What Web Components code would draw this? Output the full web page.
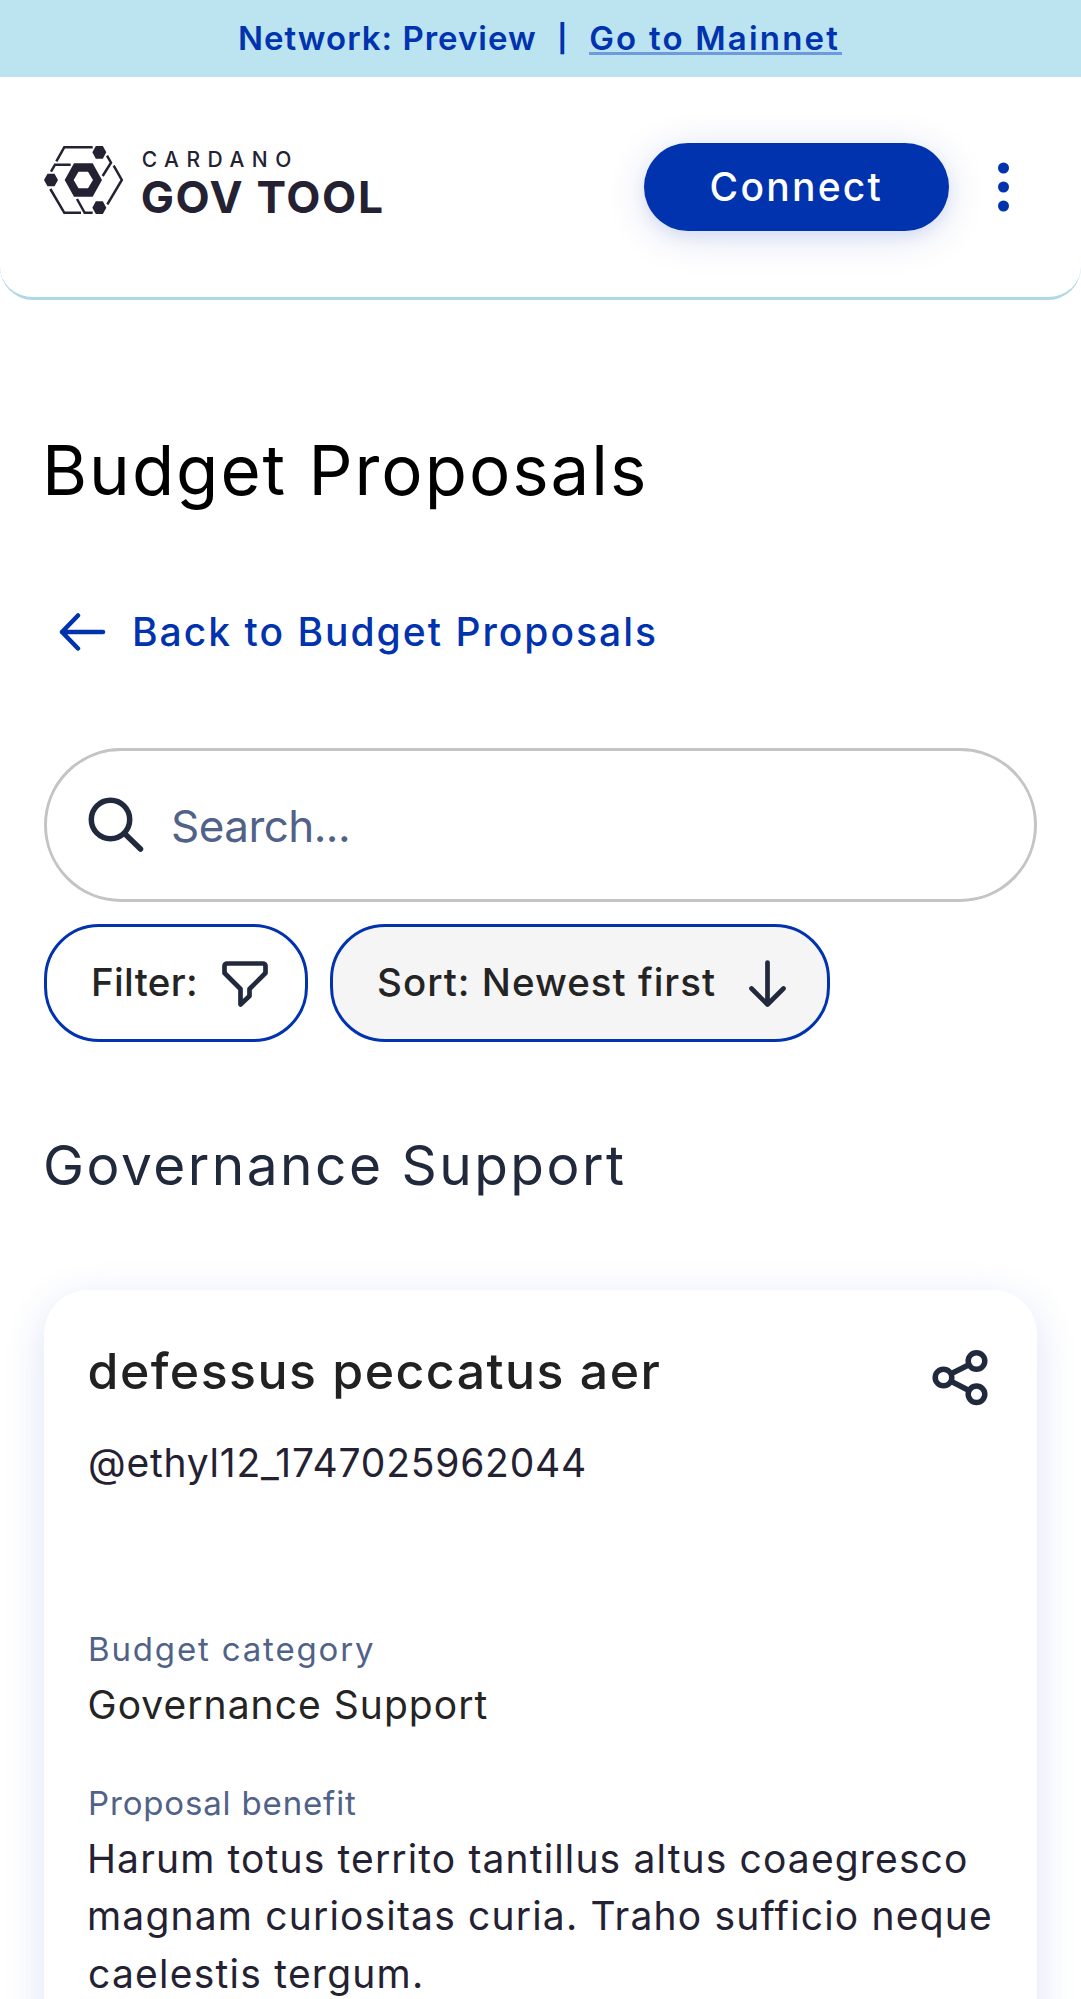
<!DOCTYPE html>
<html lang="en">
<head>
<meta charset="utf-8">
<title>Budget Proposals</title>
<style>
html,body{margin:0;padding:0;background:#fff}
body{font-family:Inter,"Noto Sans",sans-serif;height:1999px;overflow:hidden}
</style>
</head>
<body>
<govtool-page></govtool-page>
<script>
const define = (name, html, extra) => {
  const t = document.createElement('template');
  t.innerHTML = html;
  customElements.define(name, class extends HTMLElement {
    constructor() {
      super();
      this.attachShadow({mode: 'open'}).appendChild(t.content.cloneNode(true));
    }
    connectedCallback() { if (extra) extra(this); }
  });
};

// One line of text tracked out to a given ink width; "lead" is where its ink starts.
const ctx = document.createElement('canvas').getContext('2d');
define('tracked-text', `<style>:host{display:block;white-space:nowrap}</style><slot></slot>`, el => {
  const cs = getComputedStyle(el), s = el.textContent;
  ctx.font = `${cs.fontWeight} ${cs.fontSize} ${cs.fontFamily}`;
  const m = ctx.measureText(s);
  const ink = m.actualBoundingBoxLeft + m.actualBoundingBoxRight;
  const sp = (Number(el.getAttribute('ink')) - ink) / (s.length - 1);
  el.style.letterSpacing = sp.toFixed(3) + 'px';
  el.style.marginRight = (-sp).toFixed(3) + 'px';
  el.style.marginLeft = (Number(el.getAttribute('lead') || 0) + m.actualBoundingBoxLeft).toFixed(2) + 'px';
});

define('network-banner', `<style>
:host{display:flex;height:77px;background:#bbe3f0;color:#0033ad;font-size:33px;line-height:51px;font-weight:600;align-items:center;padding-left:238px}
.bar{width:30px;margin:0 12px 0 11.500px;text-align:center;font-size:27px;font-weight:700}
a{display:block;width:253px;height:51px;background:linear-gradient(#6f9adb,#6f9adb) no-repeat 0 39px/100% 3px}
</style>
<tracked-text ink="295" lead="2">Network: Preview</tracked-text><span class="bar">|</span><a><tracked-text ink="248" lead="1">Go to Mainnet</tracked-text></a>`);

define('gov-logo', `<style>:host{display:block}svg{display:block}</style>
<svg width="345" height="82" viewBox="0 0 345 82" fill="#242232">
<g transform="translate(-14 -16) scale(.33333)">
<g fill="none" stroke="#242232" stroke-width="7.5">
<path d="M79 94 103 51.5H188M231 77l12 21-25 40M63 125l12-21h47M61 177l42 71.500h50M141 207l23 41.500h24M251 107l24.500 43L232 223"/>
</g>
<path d="M187 67l10.500-19h21L229 67l-10.500 19h-21zM42 150l10.500-19h21L84 150l-10.500 19h-21zM187 233l10.500-19h21L229 233l-10.500 19h-21z"/>
<path fill-rule="evenodd" d="M104 150l28-50h56l28 50-28 50h-56zM131 150l14.500 25H174l15-25-15-25h-28.500z"/>
<text x="335" y="111" font-size="63" font-weight="500" textLength="449">CARDANO</text>
<text x="332" y="250" font-size="133" font-weight="650" textLength="727">GOV TOOL</text>
</g></svg>`);

define('connect-button', `<style>
:host{display:flex;align-items:center;justify-content:center;width:305.500px;height:88px;border-radius:44px;background:#0033ad;color:#fff;font-size:39px;font-weight:500;line-height:58px;box-shadow:0 6px 41px rgba(0,51,173,.14),0 6px 14px rgba(0,51,173,.08)}
</style><tracked-text ink="169">Connect</tracked-text>`);

define('app-header', `<style>
:host{display:flex;box-sizing:border-box;height:223px;padding:0 72px 0 44px;align-items:center;border-bottom:3px solid #add8e6;border-radius:0 0 33px 33px}
connect-button{margin-left:auto}
svg{display:block;margin-left:49px}
</style><gov-logo></gov-logo><connect-button></connect-button>
<svg width="11" height="50" fill="#0033ad"><circle cx="5.500" cy="6" r="5.500"/><circle cx="5.500" cy="25" r="5.500"/><circle cx="5.500" cy="44" r="5.500"/></svg>`);

define('back-link', `<style>
:host{display:flex;align-items:center;height:60px;color:#0033ad;font-size:39px;line-height:60px;font-weight:500}
svg{display:block;margin:0 28px 0 15px}
</style><svg width="47" height="40" fill="none" stroke="#0033ad" stroke-width="4.500" stroke-linecap="round" stroke-linejoin="round"><path d="M44 20H3M19 3.500 3 20l16 16.500"/></svg>
<tracked-text ink="520" lead="1">Back to Budget Proposals</tracked-text>`);

define('search-field', `<style>
:host{display:flex;box-sizing:border-box;align-items:center;height:154px;border:3px solid #c4c4c4;border-radius:77px;padding-left:40px;color:#506288;font-size:44px;line-height:64px}
svg{display:block;margin-right:28px}
tracked-text{margin-top:1px}
</style><svg width="58" height="58" fill="none" stroke="#212a3d" stroke-width="5.500" stroke-linecap="round"><circle cx="23.500" cy="23.500" r="19.200"/><path d="M37.500 37.500 53.500 53"/></svg>
<tracked-text ink="175">Search...</tracked-text>`);

define('pill-button', `<style>
:host{display:flex;box-sizing:border-box;align-items:center;height:118px;border:3px solid #0033ad;border-radius:55px;padding-left:45px;color:#242424;font-size:38.500px;line-height:58px;font-weight:500}
::slotted(tracked-text){margin-top:-2px}
</style><slot></slot>`);

define('list-toolbar', `<style>
:host{display:flex;gap:22px}
.f{width:264px}.s{width:500px;background:#f5f5f5}
svg{display:block;fill:none;stroke:#212a3d;stroke-width:4.700;stroke-linecap:round;stroke-linejoin:round}
.f svg{margin:2px 0 0 23px}.s svg{margin-left:33px}
</style>
<pill-button class="f"><tracked-text ink="101" lead="2">Filter:</tracked-text><svg width="48" height="48"><path d="M6 3.500H42a2.500 2.500 0 0 1 2.500 2.500V13L28.500 29V36L19.500 44.500V29L3.500 13V6A2.500 2.500 0 0 1 6 3.500z"/></svg></pill-button>
<pill-button class="s"><tracked-text ink="337">Sort: Newest first</tracked-text><svg width="40" height="50"><path d="M19.500 4.500V46M3.500 30.500l16 16 16-16"/></svg></pill-button>`);

define('detail-field', `<style>
:host{display:block;color:#242232;font-size:39px;line-height:57.500px}
.l{color:#506288;font-size:33px;line-height:50px;margin-bottom:1.500px}
</style><div class="l"><slot name="label"></slot></div><slot></slot>`);

define('proposal-card', `<style>
:host{display:block;box-sizing:border-box;height:900px;padding:46px 44px;border-radius:44px;background:#fff;box-shadow:0 11px 41px rgba(47,82,210,.16)}
.top{display:flex;justify-content:space-between;height:70px}
.t{font-size:50px;line-height:70px;font-weight:500;color:#212121}
.h{font-size:39px;line-height:58px;color:#242232;margin:28px 0 132px}
svg{display:block;margin:13px 5px 0 0}
detail-field{margin-bottom:45px}
.dark{color:#242424}
</style>
<div class="top"><tracked-text class="t" ink="570" lead="1.500">defessus peccatus aer</tracked-text>
<svg width="57" height="57" fill="none" stroke="#212a3d" stroke-width="5.500"><circle cx="12.500" cy="28.500" r="8.300"/><circle cx="45.500" cy="12" r="8.300"/><circle cx="45.500" cy="45.300" r="8.300"/><path d="M20 24.800 38 15.700M20 32.200 38 41.500"/></svg></div>
<div class="h"><tracked-text ink="494" lead="2">@ethyl12_1747025962044</tracked-text></div>
<detail-field><tracked-text slot="label" ink="283" lead="2">Budget category</tracked-text><tracked-text class="dark" ink="397" lead="1.500">Governance Support</tracked-text></detail-field>
<detail-field><tracked-text slot="label" ink="266" lead="2">Proposal benefit</tracked-text>
<tracked-text ink="876" lead="2">Harum totus territo tantillus altus coaegresco</tracked-text>
<tracked-text ink="900" lead="2">magnam curiositas curia. Traho sufficio neque</tracked-text>
<tracked-text ink="332" lead="1">caelestis tergum.</tracked-text></detail-field>`);

define('govtool-page', `<style>
:host{display:block;height:1999px;overflow:hidden}
main{padding:0 44px}
.title{font-size:69px;line-height:100px;color:#000;margin-top:120px}
back-link{margin-top:82px}
search-field{margin-top:86px}
list-toolbar{margin-top:22px}
.sub{font-size:55px;line-height:80px;color:#212a3d;margin:83px 0 85px}
</style>
<network-banner></network-banner><app-header></app-header>
<main><tracked-text class="title" ink="595" lead="4">Budget Proposals</tracked-text>
<back-link></back-link><search-field></search-field><list-toolbar></list-toolbar>
<tracked-text class="sub" ink="577" lead="2">Governance Support</tracked-text>
<proposal-card></proposal-card></main>`);
</script>
</body>
</html>
